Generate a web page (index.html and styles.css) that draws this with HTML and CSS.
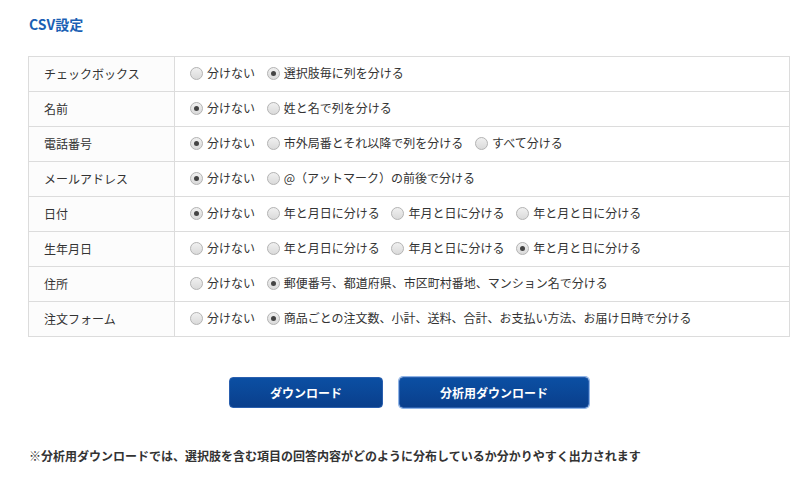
FILE: index.html
```html
<!DOCTYPE html>
<html lang="ja">
<head>
  <meta charset="UTF-8">
  <title>CSV設定</title>
  <link rel="stylesheet" href="styles.css">
</head>
<body>
  <div class="page">
    <h2 class="title">CSV設定</h2>

    <table class="csv-table">
      <tr>
        <th>チェックボックス</th>
        <td>
          <label class="opt"><span class="radio"></span>分けない</label>
          <label class="opt"><span class="radio on"></span>選択肢毎に列を分ける</label>
        </td>
      </tr>
      <tr>
        <th>名前</th>
        <td>
          <label class="opt"><span class="radio on"></span>分けない</label>
          <label class="opt"><span class="radio"></span>姓と名で列を分ける</label>
        </td>
      </tr>
      <tr>
        <th>電話番号</th>
        <td>
          <label class="opt"><span class="radio on"></span>分けない</label>
          <label class="opt"><span class="radio"></span>市外局番とそれ以降で列を分ける</label>
          <label class="opt"><span class="radio"></span>すべて分ける</label>
        </td>
      </tr>
      <tr>
        <th>メールアドレス</th>
        <td>
          <label class="opt"><span class="radio on"></span>分けない</label>
          <label class="opt"><span class="radio"></span>@（アットマーク）の前後で分ける</label>
        </td>
      </tr>
      <tr>
        <th>日付</th>
        <td>
          <label class="opt"><span class="radio on"></span>分けない</label>
          <label class="opt"><span class="radio"></span>年と月日に分ける</label>
          <label class="opt"><span class="radio"></span>年月と日に分ける</label>
          <label class="opt"><span class="radio"></span>年と月と日に分ける</label>
        </td>
      </tr>
      <tr>
        <th>生年月日</th>
        <td>
          <label class="opt"><span class="radio"></span>分けない</label>
          <label class="opt"><span class="radio"></span>年と月日に分ける</label>
          <label class="opt"><span class="radio"></span>年月と日に分ける</label>
          <label class="opt"><span class="radio on"></span>年と月と日に分ける</label>
        </td>
      </tr>
      <tr>
        <th>住所</th>
        <td>
          <label class="opt"><span class="radio"></span>分けない</label>
          <label class="opt"><span class="radio on"></span>郵便番号、都道府県、市区町村番地、マンション名で分ける</label>
        </td>
      </tr>
      <tr>
        <th>注文フォーム</th>
        <td>
          <label class="opt"><span class="radio"></span>分けない</label>
          <label class="opt"><span class="radio on"></span>商品ごとの注文数、小計、送料、合計、お支払い方法、お届け日時で分ける</label>
        </td>
      </tr>
    </table>

    <div class="buttons">
      <button class="btn">ダウンロード</button>
      <button class="btn btn-wide">分析用ダウンロード</button>
    </div>

    <p class="note">※分析用ダウンロードでは、選択肢を含む項目の回答内容がどのように分布しているか分かりやすく出力されます</p>
  </div>
</body>
</html>
```

FILE: styles.css
```css
body {
  margin: 0;
  background: #fff;
  color: #333;
  font-family: "Noto Sans CJK JP", "Liberation Sans", sans-serif;
  font-size: 12px;
}
.page {
  padding: 15px 17px 0 28px;
}
.title {
  margin: 0 0 23px 1px;
  font-size: 14px;
  line-height: 18px;
  color: #1a5fb4;
  font-weight: bold;
}
.csv-table {
  width: 100%;
  border-collapse: collapse;
  border: 1px solid #dcdcdc;
}
.csv-table tr {
  height: 35px;
}
.csv-table th,
.csv-table td {
  padding: 0;
  border: 1px solid #dcdcdc;
  text-align: left;
  font-weight: normal;
  vertical-align: middle;
  line-height: 16px;
}
.csv-table th {
  width: 130px;
  padding-left: 15px;
  background: #fcfcfc;
}
.csv-table td {
  padding-left: 15px;
}
.opt {
  display: inline-flex;
  align-items: center;
  margin-right: 9px;
  white-space: nowrap;
}
.radio {
  width: 11px;
  height: 11px;
  margin-right: 4px;
  border: 1px solid #b4b4b4;
  border-radius: 50%;
  background: linear-gradient(#f0f0f0, #dadada);
  position: relative;
}
.radio.on::after {
  content: "";
  position: absolute;
  left: 3px;
  top: 3px;
  width: 5px;
  height: 5px;
  border-radius: 50%;
  background: #444;
}
.buttons {
  display: flex;
  justify-content: center;
  gap: 16px;
  margin-top: 40px;
}
.btn {
  width: 154px;
  height: 31px;
  border: 1px solid #2a5fae;
  border-radius: 4px;
  background: linear-gradient(#0b4fa3, #0a3f8c);
  color: #fff;
  font-family: inherit;
  font-size: 12px;
  font-weight: bold;
}
.btn-wide {
  width: 190px;
  box-shadow: 0 0 0 1px #8fb4e6;
}
.note {
  margin: 39px 0 0 1px;
  font-size: 12px;
  font-weight: bold;
  color: #333;
}
```
